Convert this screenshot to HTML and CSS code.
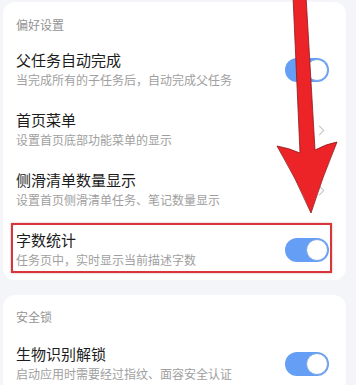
FILE: index.html
```html
<!DOCTYPE html>
<html lang="zh-CN">
<head>
<meta charset="utf-8">
<link rel="stylesheet" href="styles.css">
</head>
<body>
<div class="page">
  <section class="card card-first">
    <div class="section-title">偏好设置</div>
    <div class="row">
      <div class="texts">
        <div class="title">父任务自动完成</div>
        <div class="sub">当完成所有的子任务后，自动完成父任务</div>
      </div>
      <span class="toggle"><span class="knob"></span></span>
    </div>
    <div class="row">
      <div class="texts">
        <div class="title">首页菜单</div>
        <div class="sub">设置首页底部功能菜单的显示</div>
      </div>
      <span class="chev"></span>
    </div>
    <div class="row">
      <div class="texts">
        <div class="title">侧滑清单数量显示</div>
        <div class="sub">设置首页侧滑清单任务、笔记数量显示</div>
      </div>
      <span class="chev"></span>
    </div>
    <div class="row">
      <div class="texts">
        <div class="title">字数统计</div>
        <div class="sub">任务页中，实时显示当前描述字数</div>
      </div>
      <span class="toggle"><span class="knob"></span></span>
    </div>
  </section>
  <section class="card card-second">
    <div class="section-title">安全锁</div>
    <div class="row">
      <div class="texts">
        <div class="title">生物识别解锁</div>
        <div class="sub">启动应用时需要经过指纹、面容安全认证</div>
      </div>
      <span class="toggle"><span class="knob"></span></span>
    </div>
  </section>
  <div class="highlight"></div>
  <svg class="arrow" width="356" height="230" viewBox="0 0 356 230">
    <path d="M293 -4 L306 -4 L315 150 Q326 144 337 142 Q322 178 311 213 Q296 178 277 146 Q289 148 300 153 Z" fill="#ec2327" stroke="#8a1a1c" stroke-width="0.8" stroke-linejoin="round"/>
  </svg>
</div>
</body>
</html>
```
FILE: styles.css
```css
html, body {
  margin: 0;
  padding: 0;
}
body {
  background: #f3f5f8;
  font-family: "Noto Sans CJK SC", "Noto Sans", sans-serif;
  width: 356px;
  height: 385px;
  overflow: hidden;
}
.page {
  position: relative;
  padding: 2px 10px 0 3px;
}
.card {
  background: #ffffff;
  border-radius: 12px;
  padding: 13px 17px 0 13px;
}
.card-second {
  margin-top: 15px;
  padding-top: 12px;
}
.card-second .section-title {
  margin-bottom: 7px;
}
.section-title {
  font-size: 12px;
  line-height: 20px;
  color: #939393;
  margin-bottom: 5px;
}
.row {
  height: 60px;
  box-sizing: border-box;
  padding: 9px 0 11px;
  display: flex;
  align-items: center;
  justify-content: space-between;
}
.texts {
  display: flex;
  flex-direction: column;
}
.title {
  font-size: 15px;
  line-height: 22px;
  color: #1c1c1c;
}
.sub {
  font-size: 12px;
  line-height: 18px;
  color: #a0a0a0;
}
.toggle {
  position: relative;
  width: 44px;
  height: 24px;
  border-radius: 12px;
  background: #649ff5;
  flex: none;
  margin-top: 2px;
}
.knob {
  position: absolute;
  right: 1px;
  top: 1px;
  width: 20px;
  height: 20px;
  border-radius: 50%;
  background: #ffffff;
  border: 1px solid #7aa6e6;
}
.chev {
  width: 6px;
  height: 6px;
  border-right: 1.5px solid #c4c4c4;
  border-top: 1.5px solid #c4c4c4;
  transform: rotate(45deg);
  margin-right: 6px;
  margin-top: 2px;
  flex: none;
}
.highlight {
  position: absolute;
  left: 11px;
  top: 223px;
  width: 317px;
  height: 46px;
  border: 2px solid #d8363b;
  box-shadow: 0 0 2px rgba(120, 0, 0, 0.35);
}
.arrow {
  position: absolute;
  left: 0;
  top: 0;
}
```
